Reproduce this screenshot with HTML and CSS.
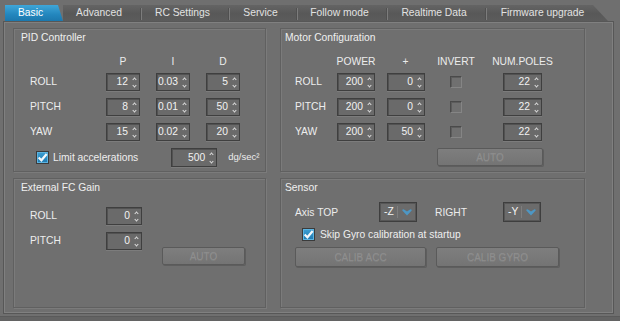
FILE: index.html
```html
<!DOCTYPE html>
<html lang="en">
<head>
  <meta charset="UTF-8" />
  <title>Basic settings</title>
  <link rel="stylesheet" href="styles.css">
</head>
<body>

  <div class="tabbar">
    <div class="tab active">Basic</div>
    <div class="tab">Advanced</div>
    <div class="tab">RC Settings</div>
    <div class="tab">Service</div>
    <div class="tab">Follow mode</div>
    <div class="tab">Realtime Data</div>
    <div class="tab last">Firmware upgrade</div>
  </div>

  <div class="panel">
    <div class="groups">

      <!-- PID -->
      <section class="group">
        <div class="group-title">PID Controller</div>
        <div class="pid-table">
          <span></span>
          <span class="head">P</span>
          <span class="head">I</span>
          <span class="head">D</span>

          <span class="label">ROLL</span>
          <div class="spin">12</div>
          <div class="spin">0.03</div>
          <div class="spin">5</div>

          <span class="label">PITCH</span>
          <div class="spin">8</div>
          <div class="spin">0.01</div>
          <div class="spin">50</div>

          <span class="label">YAW</span>
          <div class="spin">15</div>
          <div class="spin">0.02</div>
          <div class="spin">20</div>
        </div>
        <div class="limit-row">
          <span class="check on"><svg viewBox="0 0 10 10"><path d="M1.5 5 L4 7.5 L8.8 1.8"/></svg></span>
          <span class="check-text">Limit accelerations</span>
          <div class="spin wide">500</div>
          <span class="unit">dg/sec²</span>
        </div>
      </section>

      <!-- Motors -->
      <section class="group right">
        <div class="group-title">Motor Configuration</div>
        <div class="motor-table">
          <span></span>
          <span class="head">POWER</span>
          <span class="head">+</span>
          <span class="head">INVERT</span>
          <span class="head end">NUM.POLES</span>

          <span class="label">ROLL</span>
          <div class="spin mid">200</div>
          <div class="spin mid">0</div>
          <span class="check"></span>
          <div class="spin mid end">22</div>

          <span class="label">PITCH</span>
          <div class="spin mid">200</div>
          <div class="spin mid">0</div>
          <span class="check"></span>
          <div class="spin mid end">22</div>

          <span class="label">YAW</span>
          <div class="spin mid">200</div>
          <div class="spin mid">50</div>
          <span class="check"></span>
          <div class="spin mid end">22</div>

          <button class="btn motor-auto" disabled>AUTO</button>
        </div>
      </section>

      <!-- External FC -->
      <section class="group">
        <div class="group-title">External FC Gain</div>
        <div class="ext-table">
          <span class="label">ROLL</span>
          <div class="spin ext">0</div>
          <span class="label">PITCH</span>
          <div class="spin ext">0</div>
        </div>
        <button class="btn ext-auto" disabled>AUTO</button>
      </section>

      <!-- Sensor -->
      <section class="group right">
        <div class="group-title">Sensor</div>
        <div class="axis-row">
          <span class="axis-label">Axis TOP</span>
          <div class="combo"><span class="combo-text">-Z</span><svg viewBox="0 0 10 7"><path d="M0.3 1.6 Q0.3 0 2 0.4 L5 2.6 L8 0.4 Q9.7 0 9.7 1.6 L5 6.6 Z"/></svg></div>
          <span class="axis-label right-label">RIGHT</span>
          <div class="combo"><span class="combo-text">-Y</span><svg viewBox="0 0 10 7"><path d="M0.3 1.6 Q0.3 0 2 0.4 L5 2.6 L8 0.4 Q9.7 0 9.7 1.6 L5 6.6 Z"/></svg></div>
        </div>
        <div class="skip-row">
          <span class="check on"><svg viewBox="0 0 10 10"><path d="M1.5 5 L4 7.5 L8.8 1.8"/></svg></span>
          <span class="check-text">Skip Gyro calibration at startup</span>
        </div>
        <div class="calib-row">
          <button class="btn calib-acc" disabled>CALIB ACC</button>
          <button class="btn calib-gyro" disabled>CALIB GYRO</button>
        </div>
      </section>

    </div>
  </div>

  <div class="footer"></div>

</body>
</html>
```

FILE: styles.css
```css
body {
  margin: 0;
  width: 620px;
  height: 321px;
  overflow: hidden;
  background-color: #6f6f6f;
  font-family: "Liberation Sans", Arial, sans-serif;
  font-size: 10.3px;
  color: #ececec;
}

/* tabs */
.tabbar {
  height: 21px;
  padding: 5px 0 0 5px;
  box-sizing: border-box;
  display: flex;
}

.tab {
  position: relative;
  flex: none;
  height: 16px;
  line-height: 16px;
  padding-right: 7px;
  box-sizing: border-box;
  text-align: center;
  color: #e2e2e2;
  background: linear-gradient(#646464, #585858 55%, #5c5c5c);
  white-space: nowrap;
}

.tab::after {
  content: '';
  position: absolute;
  right: 0;
  top: 3px;
  bottom: 1px;
  width: 1px;
  background: #7c7c7c;
  box-shadow: -1px 0 0 #505050;
}

.tab.active {
  color: #fff;
  background: linear-gradient(#3fa6d8, #2386bd 60%, #1c78ad);
  clip-path: polygon(0 0, calc(100% - 5px) 0, 100% 100%, 0 100%);
}

.tab.active::after,
.tab.last::after { display: none; }

.tab.last {
  clip-path: polygon(0 0, calc(100% - 15px) 0, 100% 100%, 0 100%);
  padding-right: 10px;
}

.tab:nth-child(1) { width: 58px; }
.tab:nth-child(2) { width: 79px; }
.tab:nth-child(3) { width: 88px; }
.tab:nth-child(4) { width: 68px; }
.tab:nth-child(5) { width: 90px; }
.tab:nth-child(6) { width: 99px; }
.tab:nth-child(7) { width: 121px; }

/* main panel */
.panel {
  margin-left: 3px;
  width: 611px;
  height: 293px;
  box-sizing: border-box;
  border: 1px solid #575757;
  box-shadow: inset 1px 1px 0 #808080, inset -1px -1px 0 #808080;
}

.groups {
  display: grid;
  grid-template-columns: 253px 305px;
  grid-template-rows: 144px 130px;
  column-gap: 14px;
  row-gap: 6px;
  padding: 6px 0 0 9px;
}

.group {
  border: 1px solid #606060;
  box-shadow: inset 1px 1px 0 #7b7b7b, 1px 1px 0 #7b7b7b;
  padding: 2px 0 0 16px;
  box-sizing: border-box;
}

.group.right { padding-left: 14px; }

.group-title {
  line-height: 13px;
  margin-left: -9px;
  color: #f0f0f0;
}

.group.right .group-title { margin-left: -10px; }

.label { line-height: 17px; color: #ededed; }

.head {
  display: flex;
  justify-content: center;
  line-height: 10px;
  white-space: nowrap;
}

/* tables */
.pid-table {
  margin-top: 13px;
  display: grid;
  grid-template-columns: 60px 34px 34px 34px;
  grid-template-rows: 9px 18px 18px 18px;
  column-gap: 16px;
  row-gap: 7px;
}

.motor-table {
  margin-top: 13px;
  display: grid;
  grid-template-columns: 30px 38px 37px 40px 54px;
  grid-template-rows: 9px 18px 18px 18px 18px;
  column-gap: 12px;
  row-gap: 7px;
  align-items: center;
}

.motor-table .head,
.motor-table .label { align-self: start; }
.motor-table .head.end,
.motor-table .spin.end { justify-self: end; width: 39px; }
.motor-table .check { justify-self: center; }

.ext-table {
  margin-top: 13px;
  display: grid;
  grid-template-columns: 60px 36px;
  grid-template-rows: 18px 18px;
  column-gap: 16px;
  row-gap: 7px;
}

/* spin boxes */
.spin {
  position: relative;
  width: 34px;
  height: 18px;
  box-sizing: border-box;
  border: 1px solid #3f3f3f;
  background: #6a6a6a;
  box-shadow: inset 1px 1px 0 #525252, 0 1px 0 #7c7c7c;
  padding-right: 11px;
  text-align: right;
  line-height: 16px;
  color: #f2f2f2;
}

.spin::before,
.spin::after {
  content: '';
  position: absolute;
  right: 3px;
  width: 2px;
  height: 2px;
  border-left: 1.4px solid #dcdcdc;
  border-top: 1.4px solid #dcdcdc;
}

.spin::before { top: 3.5px; transform: rotate(45deg); }
.spin::after { bottom: 3.5px; transform: rotate(225deg); }

.spin.mid { width: 38px; }
.spin.ext { width: 36px; }
.spin.wide { width: 46px; height: 19px; line-height: 17px; }

/* check boxes */
.check {
  display: inline-block;
  width: 12px;
  height: 12px;
  box-sizing: border-box;
  border: 1px solid #4a4a4a;
  border-right-color: #858585;
  border-bottom-color: #858585;
  background: #707070;
  box-shadow: inset 1px 1px 0 #5c5c5c;
}

.check.on {
  width: 13px;
  height: 13px;
  border-color: #3b3b3b;
  background: linear-gradient(#3c9fd3, #1e79b0);
  box-shadow: inset 0 0 0 1px #5cb3e0;
}

.check svg {
  display: block;
  width: 11px;
  height: 11px;
  fill: none;
  stroke: #f4f8fb;
  stroke-width: 2;
}

.check-text { color: #eeeeee; }

.limit-row {
  margin-top: 7px;
  padding-left: 6px;
  height: 19px;
  display: flex;
  align-items: center;
}

.limit-row .check-text { margin-left: 4px; }
.limit-row .spin { margin-left: 33px; }
.limit-row .unit { margin-left: 11px; margin-top: -3px; font-size: 9.5px; }

/* buttons */
.btn {
  height: 18px;
  padding: 0;
  border: 1px solid #5a5a5a;
  border-radius: 2px;
  background: linear-gradient(#7e7e7e, #747474);
  box-shadow: 1px 1px 0 #5e5e5e;
  font-family: inherit;
  font-size: 10px;
  color: #8e8e8e;
  text-shadow: 0 1px 0 rgba(255,255,255,0.08);
}

.motor-auto {
  grid-column: 4 / 6;
  width: 106px;
  justify-self: start;
  margin-left: 1px;
}

.ext-auto {
  display: block;
  width: 83px;
  margin: -3px 0 0 132px;
}

/* sensor */
.axis-row {
  margin-top: 8px;
  display: flex;
  align-items: center;
  height: 20px;
}

.axis-label { width: 84px; }
.right-label { width: 68px; margin-left: 18px; }

.combo {
  width: 38px;
  height: 20px;
  box-sizing: border-box;
  border: 1px solid #3e3e3e;
  box-shadow: inset 0 0 0 1px #565656;
  background: #6b6b6b;
  display: flex;
  align-items: center;
}

.combo-text {
  flex: 1;
  padding-left: 4px;
  color: #f4f4f4;
  border-right: 1px solid #7e7e7e;
  line-height: 12px;
}

.combo svg {
  width: 10px;
  height: 7px;
  margin: 1px 4px 0 4px;
  fill: #4d97c4;
}

.skip-row {
  margin-top: 6px;
  padding-left: 7px;
  height: 12px;
  display: flex;
  align-items: center;
}

.skip-row .check-text { margin-left: 5px; }

.calib-row {
  margin-top: 7px;
  display: flex;
  gap: 10px;
}

.calib-row .btn { height: 20px; }
.calib-acc { width: 131px; }
.calib-gyro { width: 123px; }

.footer {
  margin-top: 3px;
  height: 4px;
  background: #636363;
  box-shadow: 0 -1px 0 #5a5a5a;
}
```
